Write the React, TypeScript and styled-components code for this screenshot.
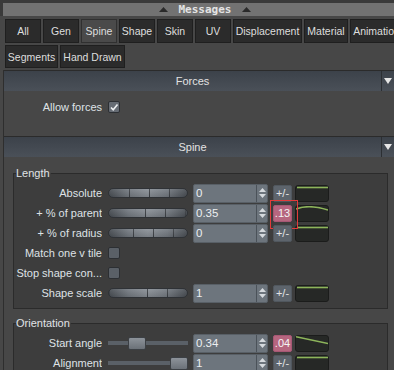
import styled, { createGlobalStyle } from "styled-components";

const GlobalStyle = createGlobalStyle`
  html, body {
    margin: 0;
    padding: 0;
    background: #474747;
  }
  body {
    font-family: "Liberation Sans", Arial, sans-serif;
  }
`;

const Window = styled.div`
  width: 394px;
  height: 370px;
  overflow: hidden;
  background: #474747;
  display: flex;
  flex-direction: column;
`;

const TitleStrip = styled.div`
  flex-shrink: 0;
  background: #3a3a3a;
  padding: 3px 0 0 3px;
`;

const TitleBar = styled.div`
  height: 13px;
  background: #727272;
  display: flex;
  align-items: center;
  justify-content: center;
  gap: 11px;
  padding-left: 13px;
`;

const TitleText = styled.span`
  font-family: "DejaVu Sans Mono", monospace;
  font-weight: bold;
  font-size: 11px;
  line-height: 13px;
  color: #e4e4e4;
`;

const TabStrip = styled.div`
  flex-shrink: 0;
  display: flex;
  flex-direction: column;
  gap: 2px;
  padding: 3px 0 0 5px;
`;

const TabRow = styled.div<{ $h: number }>`
  display: flex;
  gap: 2px;
  height: ${p => p.$h}px;
`;

const Tab = styled.div<{ $w: number; $active?: boolean }>`
  flex: 0 0 ${p => p.$w}px;
  box-sizing: border-box;
  display: flex;
  align-items: center;
  justify-content: center;
  border: 1px solid ${p => (p.$active ? "#303030" : "#1f1f1f")};
  background: ${p => (p.$active ? "#4a4a4a" : "#2b2b2b")};
  color: #dedede;
  font-size: 10.5px;
  white-space: nowrap;
  overflow: hidden;
`;

const Content = styled.div`
  flex: 1;
  margin: 2px 0 0 3px;
  border-left: 1px solid #2e2e2e;
  display: flex;
  flex-direction: column;
  min-height: 0;
`;

const SectionHeader = styled.div`
  flex-shrink: 0;
  height: 21px;
  box-sizing: border-box;
  border-top: 1px solid #2b2b2b;
  background: linear-gradient(to bottom, #3c424a, #4a5058);
  display: flex;
  color: #e2e2e2;
  font-size: 11px;
`;

const HeaderTitle = styled.div`
  flex: 1;
  display: flex;
  align-items: center;
  justify-content: center;
`;

const HeaderToggle = styled.div`
  width: 12px;
  border-left: 1px solid #2c2f33;
  display: flex;
  align-items: center;
  justify-content: center;
`;

const SectionBody = styled.div<{ $pad: string }>`
  flex-shrink: 0;
  padding: ${p => p.$pad};
`;

const Group = styled.fieldset<{ $top: number }>`
  margin: ${p => p.$top}px 6px 0 9px;
  padding: 4px 0 5px 0;
  border: 1px solid #2b2b2b;
  background: #3d3d3d;
  min-width: 0;
`;

const GroupTitle = styled.legend`
  margin-left: 2px;
  padding: 0 1px 0 0;
  font-size: 11px;
  line-height: 12px;
  color: #e0e3e6;
`;

const Row = styled.div`
  display: flex;
  align-items: center;
  height: 20px;
`;

const Label = styled.div`
  flex: 0 0 88px;
  margin-right: 6px;
  text-align: right;
  font-size: 11px;
  color: #dfe2e6;
  white-space: nowrap;
  overflow: hidden;
`;

const Check = styled.div<{ $on?: boolean }>`
  width: 12px;
  height: 12px;
  box-sizing: border-box;
  border: 1px solid #2c2f33;
  border-radius: 2px;
  background: ${p => (p.$on ? "#666c74" : "#5a6067")};
  display: flex;
  align-items: center;
  justify-content: center;
`;

const SegSlider = styled.div<{ $offset: number }>`
  flex: 0 0 80px;
  height: 10px;
  box-sizing: border-box;
  margin-right: 5px;
  border: 1px solid #2f3236;
  border-radius: 5px;
  background:
    linear-gradient(to bottom, rgba(255, 255, 255, 0.07), rgba(0, 0, 0, 0.12)),
    repeating-linear-gradient(to right, transparent 0 19px, #3d4146 19px 20px),
    linear-gradient(to right, #4a4f55, #757b82 25%, #8b9198 50%, #757b82 75%, #4a4f55);
  background-position: 0 0, ${p => p.$offset}px 0, 0 0;
`;

const TrackSlider = styled.div`
  flex: 0 0 80px;
  height: 13px;
  margin-right: 5px;
  display: flex;
  align-items: center;
  background: linear-gradient(#5a6067, #5a6067) center / 100% 4px no-repeat;
  border-radius: 2px;
`;

const Handle = styled.div<{ $pos: number }>`
  width: 18px;
  height: 13px;
  box-sizing: border-box;
  margin-left: ${p => p.$pos}px;
  border: 1px solid #3c4045;
  border-radius: 2px;
  background: linear-gradient(to bottom, #8d939a, #6b7178);
`;

const Field = styled.div`
  flex: 0 0 75px;
  height: 19px;
  box-sizing: border-box;
  display: flex;
  border: 1px solid #585f66;
  border-radius: 2px;
  background: #6d757d;
`;

const FieldText = styled.div`
  flex: 1;
  padding-left: 2px;
  display: flex;
  align-items: center;
  font-size: 11.5px;
  color: #eceef0;
`;

const Spinner = styled.div`
  width: 10px;
  border-left: 1px solid #4b5259;
  display: flex;
  flex-direction: column;
  align-items: center;
  justify-content: center;
  gap: 2px;
`;

const KeyWrap = styled.div`
  position: relative;
  margin-left: 5px;
  display: flex;
`;

const KeyButton = styled.div<{ $keyed?: boolean }>`
  width: 19px;
  height: 17px;
  box-sizing: border-box;
  border-radius: 2px;
  border: 1px solid ${p => (p.$keyed ? "#a65774" : "#50575e")};
  background: ${p => (p.$keyed ? "#b6667f" : "#5d646c")};
  display: flex;
  align-items: center;
  justify-content: center;
  font-size: 11px;
  color: ${p => (p.$keyed ? "#f4f4f4" : "#e2e4e6")};
`;

const FocusRing = styled.div`
  position: absolute;
  left: -3px;
  top: -5px;
  width: 28px;
  height: 29px;
  box-sizing: border-box;
  border: 1px solid #e23b3b;
  pointer-events: none;
`;

const CurveBox = styled.div`
  margin-left: 3px;
  width: 34px;
  height: 17px;
  box-sizing: border-box;
  border: 1px solid #1b1c1b;
  border-radius: 3px;
  background: #262826;
  display: flex;
`;

type CurveKind = "flat" | "arch" | "fall";

const curvePaths: Record<CurveKind, string> = {
  flat: "M1 1.5 H32",
  arch: "M0 3 Q13 -2 32 4",
  fall: "M0 0.8 L32 7.5",
};

const UpArrow = ({ color = "#d6dade" }: { color?: string }) => (
  <svg width="7" height="4" viewBox="0 0 7 4">
    <polygon points="0,4 3.5,0 7,4" fill={color} />
  </svg>
);

const DownArrow = ({ color = "#d6dade" }: { color?: string }) => (
  <svg width="7" height="4" viewBox="0 0 7 4">
    <polygon points="0,0 7,0 3.5,4" fill={color} />
  </svg>
);

const TitleArrow = () => (
  <svg width="9" height="5" viewBox="0 0 9 5">
    <polygon points="0,5 4.5,0 9,5" fill="#2a2a2a" />
  </svg>
);

const CollapseArrow = () => (
  <svg width="8" height="6" viewBox="0 0 8 6">
    <polygon points="0,0 8,0 4,6" fill="#e6e6e6" />
  </svg>
);

const Tick = () => (
  <svg width="10" height="10" viewBox="0 0 10 10">
    <polyline points="2,5.5 4.2,7.8 8.5,2.5" fill="none" stroke="#eef0f2" strokeWidth="1.6" />
  </svg>
);

interface ValueProps {
  value: string;
  keyed?: string;
  focused?: boolean;
  curve: CurveKind;
}

const ValueControls = ({ value, keyed, focused, curve }: ValueProps) => (
  <>
    <Field>
      <FieldText>{value}</FieldText>
      <Spinner>
        <UpArrow />
        <DownArrow />
      </Spinner>
    </Field>
    <KeyWrap>
      <KeyButton $keyed={!!keyed}>{keyed ?? "+/-"}</KeyButton>
      {focused && <FocusRing />}
    </KeyWrap>
    <CurveBox>
      <svg width="32" height="15" viewBox="0 0 32 15">
        <path d={curvePaths[curve]} fill="none" stroke="#8db45b" strokeWidth="1.6" />
      </svg>
    </CurveBox>
  </>
);

const tabsTop = [
  { name: "All", w: 36 },
  { name: "Gen", w: 36 },
  { name: "Spine", w: 36, active: true },
  { name: "Shape", w: 36 },
  { name: "Skin", w: 36 },
  { name: "UV", w: 36 },
  { name: "Displacement", w: 69 },
  { name: "Material", w: 44 },
  { name: "Animation", w: 53 },
];

const tabsBottom = [
  { name: "Segments", w: 53 },
  { name: "Hand Drawn", w: 65 },
];

export default function App() {
  return (
    <Window>
      <GlobalStyle />
      <TitleStrip>
        <TitleBar>
          <TitleArrow />
          <TitleText>Messages</TitleText>
          <TitleArrow />
        </TitleBar>
      </TitleStrip>

      <TabStrip>
        <TabRow $h={24}>
          {tabsTop.map(t => (
            <Tab key={t.name} $w={t.w} $active={t.active}>{t.name}</Tab>
          ))}
        </TabRow>
        <TabRow $h={23}>
          {tabsBottom.map(t => (
            <Tab key={t.name} $w={t.w}>{t.name}</Tab>
          ))}
        </TabRow>
      </TabStrip>

      <Content>
        <SectionHeader>
          <HeaderTitle>Forces</HeaderTitle>
          <HeaderToggle><CollapseArrow /></HeaderToggle>
        </SectionHeader>
        <SectionBody $pad="6px 0 19px 10px">
          <Row>
            <Label>Allow forces</Label>
            <Check $on><Tick /></Check>
          </Row>
        </SectionBody>

        <SectionHeader>
          <HeaderTitle>Spine</HeaderTitle>
          <HeaderToggle><CollapseArrow /></HeaderToggle>
        </SectionHeader>
        <SectionBody $pad="0">
          <Group $top={10}>
            <GroupTitle>Length</GroupTitle>
            <Row>
              <Label>Absolute</Label>
              <SegSlider $offset={1} />
              <ValueControls value="0" curve="flat" />
            </Row>
            <Row>
              <Label>+ % of parent</Label>
              <SegSlider $offset={17} />
              <ValueControls value="0.35" keyed=".13" focused curve="arch" />
            </Row>
            <Row>
              <Label>+ % of radius</Label>
              <SegSlider $offset={5} />
              <ValueControls value="0" curve="flat" />
            </Row>
            <Row>
              <Label>Match one v tile</Label>
              <Check />
            </Row>
            <Row>
              <Label>Stop shape con...</Label>
              <Check />
            </Row>
            <Row>
              <Label>Shape scale</Label>
              <SegSlider $offset={19} />
              <ValueControls value="1" curve="flat" />
            </Row>
          </Group>

          <Group $top={8}>
            <GroupTitle>Orientation</GroupTitle>
            <Row>
              <Label>Start angle</Label>
              <TrackSlider>
                <Handle $pos={20} />
              </TrackSlider>
              <ValueControls value="0.34" keyed=".04" curve="fall" />
            </Row>
            <Row>
              <Label>Alignment</Label>
              <TrackSlider>
                <Handle $pos={62} />
              </TrackSlider>
              <ValueControls value="1" curve="flat" />
            </Row>
          </Group>
        </SectionBody>
      </Content>
    </Window>
  );
}
